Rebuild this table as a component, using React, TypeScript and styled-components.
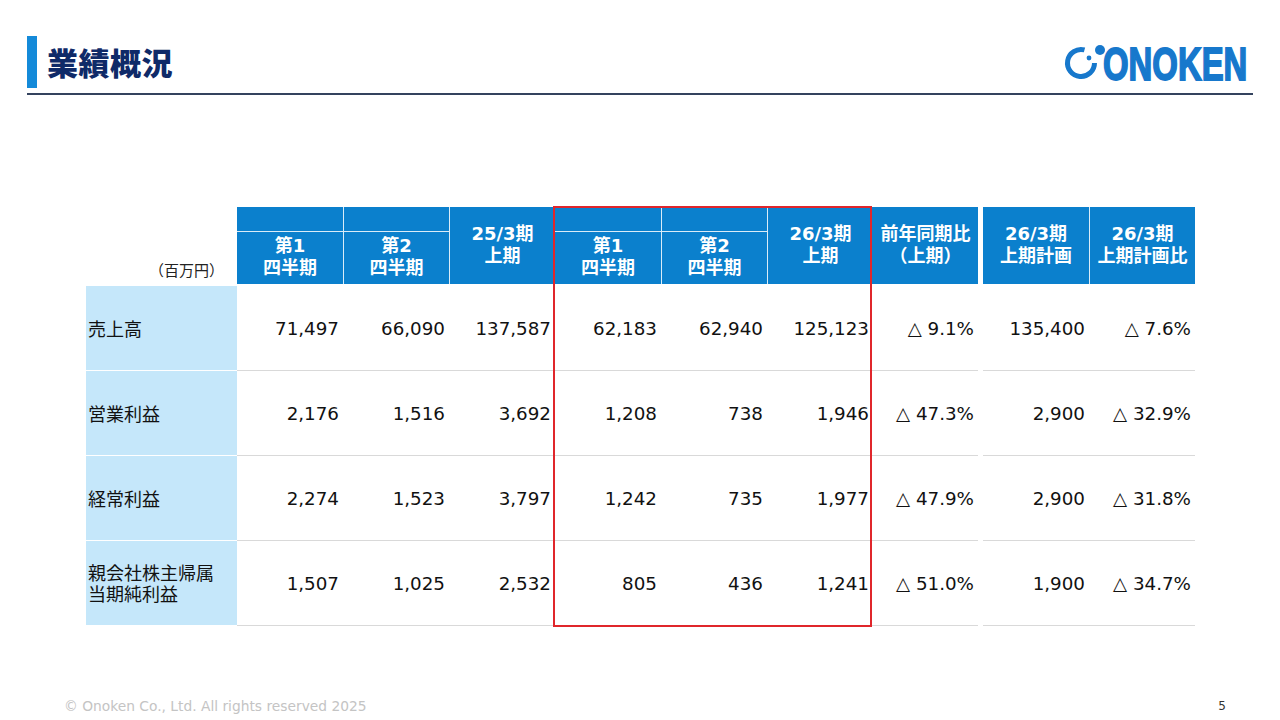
import React from "react";
import styled, { createGlobalStyle } from "styled-components";

const Global = createGlobalStyle`
  html, body { margin: 0; padding: 0; background: #fff; }
  body { font-family: "DejaVu Sans", "Noto Sans CJK JP", sans-serif; }
`;

const Page = styled.div`
  width: 1280px;
  height: 720px;
  display: flex;
  flex-direction: column;
  background: #fff;
  overflow: hidden;
`;

const TopBar = styled.header`
  margin: 36px 27px 0;
  padding: 0 3px 5px 0;
  border-bottom: 2px solid #34435e;
  display: flex;
  align-items: center;
  justify-content: space-between;
`;

const TitleGroup = styled.div`
  display: flex;
  align-items: center;
  height: 52px;
`;

const TitleMark = styled.span`
  width: 10px;
  height: 52px;
  background: #148ad9;
`;

const Title = styled.h1`
  margin: 0 0 0 10px;
  font-family: "Noto Sans CJK JP", sans-serif;
  font-weight: 900;
  font-size: 31px;
  line-height: 52px;
  color: #0f2a68;
  letter-spacing: 0.5px;
`;

const Grid = styled.div`
  margin: 112px 0 0 86px;
  display: grid;
  grid-template-columns: 151px repeat(6, 106px) 105px 5px 106px 106px;
  grid-template-rows: 24px 53px 2px repeat(4, 85px);
  font-size: 18px;
  color: #111;
`;

const Unit = styled.div`
  grid-column: 1;
  grid-row: 1 / 3;
  display: flex;
  align-items: flex-end;
  justify-content: flex-end;
  padding: 0 13px 4px 0;
  font-family: "Noto Sans CJK JP", sans-serif;
  font-size: 15px;
  color: #222;
`;

const HeadCell = styled.div<{ $col: number; $row: string; $sep?: boolean; $sub?: boolean }>`
  grid-column: ${(p) => p.$col};
  grid-row: ${(p) => p.$row};
  background: #0b80cd;
  color: #fff;
  font-weight: 700;
  font-size: 18px;
  line-height: 22px;
  text-align: center;
  display: flex;
  align-items: center;
  justify-content: center;
  white-space: pre-line;
  border-left: ${(p) => (p.$sep ? "1px solid rgba(255,255,255,0.85)" : "none")};
  border-top: ${(p) => (p.$sub ? "1px solid rgba(255,255,255,0.85)" : "none")};
  padding-bottom: 2px;
`;

const LabelCell = styled.div<{ $row: number }>`
  grid-column: 1;
  grid-row: ${(p) => p.$row};
  background: #c5e7fa;
  border-bottom: 1px solid #fff;
  display: flex;
  align-items: center;
  padding-left: 2px;
  font-family: "Noto Sans CJK JP", sans-serif;
  font-size: 18px;
  line-height: 21px;
  white-space: pre-line;
  color: #111;
`;

const DataCell = styled.div<{ $row: number; $col: number }>`
  grid-column: ${(p) => p.$col};
  grid-row: ${(p) => p.$row};
  border-bottom: 1px solid #d9d9d9;
  display: flex;
  align-items: center;
  justify-content: flex-end;
  padding-right: 4px;
  font-size: 18.3px;
  color: #111;
  white-space: nowrap;
`;

const Highlight = styled.div`
  grid-column: 5 / 8;
  grid-row: 1 / 8;
  margin: -1px 1px -1px -2px;
  border: 2px solid #e0262b;
  pointer-events: none;
  z-index: 2;
`;

const Footer = styled.footer`
  margin-top: auto;
  margin-bottom: 6px;
  padding: 0 54px 0 64px;
  display: flex;
  align-items: center;
  justify-content: space-between;
`;

const Copy = styled.span`
  font-size: 13.8px;
  color: #c4c4c4;
`;

const PageNo = styled.span`
  font-size: 12px;
  color: #333;
`;

const LogoSvg = styled.svg`
  display: block;
`;

const Logo = () => (
  <LogoSvg width="186" height="42" viewBox="0 0 186 42">
    <path d="M20.5 8.96 A13.5 13.5 0 1 0 30.5 22" fill="none" stroke="#1778cc" strokeWidth="5" />
    <circle cx="36" cy="9" r="5" fill="#1778cc" />
    <circle cx="25" cy="17" r="2.4" fill="#1778cc" />
    <text
      transform="translate(39 38.5) scale(0.715 1)"
      x="0"
      y="0"
      fontFamily="Liberation Sans, Arial, sans-serif"
      fontWeight="700"
      fontSize="46"
      fill="#1778cc"
      stroke="#1778cc"
      strokeWidth="1.8"
    >
      ONOKEN
    </text>
  </LogoSvg>
);

const rows = [
  { label: "売上高", vals: ["71,497", "66,090", "137,587", "62,183", "62,940", "125,123", "△ 9.1%", "135,400", "△ 7.6%"] },
  { label: "営業利益", vals: ["2,176", "1,516", "3,692", "1,208", "738", "1,946", "△ 47.3%", "2,900", "△ 32.9%"] },
  { label: "経常利益", vals: ["2,274", "1,523", "3,797", "1,242", "735", "1,977", "△ 47.9%", "2,900", "△ 31.8%"] },
  { label: "親会社株主帰属\n当期純利益", vals: ["1,507", "1,025", "2,532", "805", "436", "1,241", "△ 51.0%", "1,900", "△ 34.7%"] },
];

const dataCols = [2, 3, 4, 5, 6, 7, 8, 10, 11];

export default function App() {
  return (
    <>
      <Global />
      <Page>
        <TopBar>
          <TitleGroup>
            <TitleMark />
            <Title>業績概況</Title>
          </TitleGroup>
          <Logo />
        </TopBar>

        <Grid>
          <Unit>（百万円）</Unit>

          <HeadCell $col={2} $row="1" />
          <HeadCell $col={2} $row="2" $sub>{"第1\n四半期"}</HeadCell>
          <HeadCell $col={3} $row="1" $sep />
          <HeadCell $col={3} $row="2" $sep $sub>{"第2\n四半期"}</HeadCell>
          <HeadCell $col={4} $row="1 / 3" $sep>{"25/3期\n上期"}</HeadCell>

          <HeadCell $col={5} $row="1" />
          <HeadCell $col={5} $row="2" $sub>{"第1\n四半期"}</HeadCell>
          <HeadCell $col={6} $row="1" $sep />
          <HeadCell $col={6} $row="2" $sep $sub>{"第2\n四半期"}</HeadCell>
          <HeadCell $col={7} $row="1 / 3" $sep>{"26/3期\n上期"}</HeadCell>

          <HeadCell $col={8} $row="1 / 3">{"前年同期比\n（上期）"}</HeadCell>
          <HeadCell $col={10} $row="1 / 3">{"26/3期\n上期計画"}</HeadCell>
          <HeadCell $col={11} $row="1 / 3" $sep>{"26/3期\n上期計画比"}</HeadCell>

          {rows.map((r, i) => (
            <React.Fragment key={r.label}>
              <LabelCell $row={i + 4}>{r.label}</LabelCell>
              {r.vals.map((v, j) => (
                <DataCell key={j} $row={i + 4} $col={dataCols[j]}>
                  {v}
                </DataCell>
              ))}
            </React.Fragment>
          ))}

          <Highlight />
        </Grid>

        <Footer>
          <Copy>© Onoken Co., Ltd. All rights reserved 2025</Copy>
          <PageNo>5</PageNo>
        </Footer>
      </Page>
    </>
  );
}
